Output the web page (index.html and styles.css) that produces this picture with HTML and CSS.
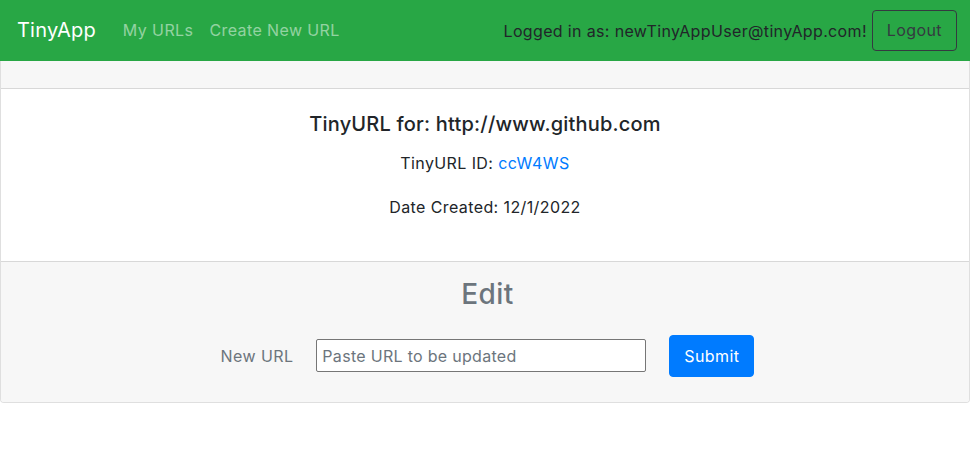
FILE: index.html
```html
<!DOCTYPE html>
<html lang="en">
<head>
<meta charset="utf-8">
<title>TinyApp</title>
<link rel="stylesheet" href="styles.css">
</head>
<body>
<nav class="navbar">
  <a class="brand" href="#">TinyApp</a>
  <div class="nav-links">
    <a class="nav-link" href="#">My URLs</a>
    <a class="nav-link" href="#">Create New URL</a>
  </div>
  <div class="nav-right">
    <span class="user">Logged in as: newTinyAppUser@tinyApp.com!</span>
    <button class="btn-logout" type="button">Logout</button>
  </div>
</nav>
<main class="card">
  <div class="card-header"></div>
  <div class="card-body">
    <h5 class="card-title">TinyURL for: http://www.github.com</h5>
    <p class="line">TinyURL ID: <a class="link" href="#">ccW4WS</a></p>
    <p class="line">Date Created: 12/1/2022</p>
  </div>
  <div class="card-footer">
    <h3 class="edit-title">Edit</h3>
    <form class="edit-form">
      <label class="form-label" for="newurl">New URL</label>
      <input class="form-input" id="newurl" type="text" placeholder="Paste URL to be updated">
      <button class="btn-submit" type="submit">Submit</button>
    </form>
  </div>
</main>
</body>
</html>
```
FILE: styles.css
```css
* { box-sizing: border-box; }
body {
  margin: 0;
  font-family: Inter, "Liberation Sans", sans-serif;
  font-size: 16px;
  line-height: 1.5;
  letter-spacing: 0.4px;
  color: #212529;
  background: #fff;
}
.navbar {
  height: 61px;
  background: #28a745;
  display: flex;
  align-items: center;
  padding: 0 13px 0 17px;
}
.brand {
  color: #fff;
  font-size: 20px;
  letter-spacing: 0.2px;
  text-decoration: none;
  margin-right: 19px;
  margin-bottom: 1px;
}
.nav-links {
  display: flex;
  flex: 1;
  margin-bottom: 1px;
}
.nav-link {
  color: rgba(255,255,255,.5);
  font-size: 16px;
  text-decoration: none;
  padding: 0 8px 0 8px;
}
.nav-right {
  display: flex;
  align-items: center;
  gap: 5px;
}
.user { color: #212529; font-size: 16px; letter-spacing: 0.35px; }
.btn-logout {
  font-family: inherit;
  font-size: 16px;
  letter-spacing: 0.4px;
  color: #343a40;
  background: transparent;
  border: 1px solid #343a40;
  border-radius: 4px;
  height: 41px;
  padding: 0 14px;
  margin-bottom: 1px;
}
.card {
  display: block;
  border: 1px solid rgba(0,0,0,.125);
  border-top: 0;
  border-radius: 0 0 4px 4px;
}
.card-header {
  height: 28px;
  background: #f7f7f7;
  border-bottom: 1px solid rgba(0,0,0,.125);
}
.card-body {
  padding: 23px 20px 20px;
  text-align: center;
  height: 172px;
}
.card-title {
  margin: 0 0 15px;
  font-size: 20px;
  font-weight: 500;
  letter-spacing: 0.2px;
  line-height: 1.2;
}
.line {
  margin: 0 0 20px;
}
.link { color: #007bff; text-decoration: none; }
.card-footer {
  background: #f7f7f7;
  border-top: 1px solid rgba(0,0,0,.125);
  padding: 16px 20px 25px 25px;
  text-align: center;
  border-radius: 0 0 3px 3px;
}
.edit-title {
  margin: 0 0 23px;
  font-size: 28px;
  font-weight: 500;
  letter-spacing: 0.4px;
  line-height: 1.2;
  color: #6c757d;
}
.edit-form {
  display: flex;
  align-items: center;
  justify-content: center;
}
.form-label {
  color: #6c757d;
  margin-right: 23px;
}
.form-input {
  width: 330px;
  height: 33px;
  border: 1px solid #767676;
  border-radius: 2px;
  padding: 0 5px;
  font-family: inherit;
  font-size: 16px;
  letter-spacing: 0.3px;
  color: #212529;
  background: #fff;
}
.form-input::placeholder { color: #6c757d; }
.btn-submit {
  margin-left: 23px;
  height: 42px;
  padding: 0 14px;
  font-family: inherit;
  font-size: 16px;
  letter-spacing: 0.4px;
  color: #fff;
  background: #007bff;
  border: 1px solid #007bff;
  border-radius: 4px;
}
```
